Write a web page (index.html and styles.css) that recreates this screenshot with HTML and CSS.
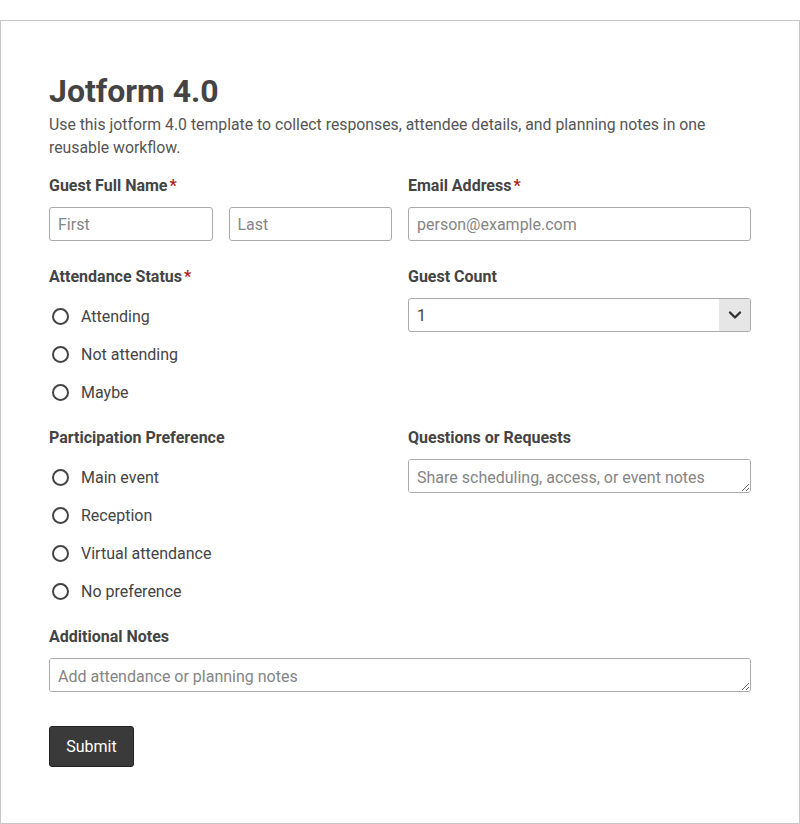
FILE: index.html
```html
<!DOCTYPE html>
<html lang="en">
<head>
<meta charset="utf-8">
<title>Jotform 4.0</title>
<link rel="stylesheet" href="styles.css">
</head>
<body>
<main class="card">
  <h1 class="title">Jotform 4.0</h1>
  <p class="desc">Use this jotform 4.0 template to collect responses, attendee details, and planning notes in one reusable workflow.</p>
  <form class="grid">
    <div class="field">
      <div class="label">Guest Full Name<span class="req">*</span></div>
      <div class="name-row">
        <input class="input" type="text" placeholder="First">
        <input class="input" type="text" placeholder="Last">
      </div>
    </div>
    <div class="field">
      <div class="label">Email Address<span class="req">*</span></div>
      <input class="input" type="email" placeholder="person@example.com">
    </div>

    <div class="field">
      <div class="label">Attendance Status<span class="req">*</span></div>
      <div class="options">
        <label class="option"><span class="radio"></span>Attending</label>
        <label class="option"><span class="radio"></span>Not attending</label>
        <label class="option"><span class="radio"></span>Maybe</label>
      </div>
    </div>
    <div class="field">
      <div class="label">Guest Count</div>
      <div class="select">
        <span class="select-value">1</span>
        <span class="select-arrow">
          <svg width="14" height="10" viewBox="0 0 14 10"><path d="M2 2.5 L7 7.5 L12 2.5" fill="none" stroke="#333" stroke-width="2.4" stroke-linecap="round" stroke-linejoin="round"/></svg>
        </span>
      </div>
    </div>

    <div class="field">
      <div class="label">Participation Preference</div>
      <div class="options">
        <label class="option"><span class="radio"></span>Main event</label>
        <label class="option"><span class="radio"></span>Reception</label>
        <label class="option"><span class="radio"></span>Virtual attendance</label>
        <label class="option"><span class="radio"></span>No preference</label>
      </div>
    </div>
    <div class="field">
      <div class="label">Questions or Requests</div>
      <textarea class="input textarea" rows="1" placeholder="Share scheduling, access, or event notes"></textarea>
    </div>

    <div class="field full">
      <div class="label">Additional Notes</div>
      <textarea class="input textarea" rows="1" placeholder="Add attendance or planning notes"></textarea>
    </div>

    <div class="actions full">
      <button class="submit" type="button">Submit</button>
    </div>
  </form>
</main>
</body>
</html>
```

FILE: styles.css
```css
* { box-sizing: border-box; }

html, body {
  margin: 0;
  padding: 0;
  background: #ffffff;
}

body {
  padding-top: 20px;
  font-family: Roboto, "Liberation Sans", Arial, sans-serif;
  color: #444;
}

.card {
  width: 800px;
  border: 1px solid #c8c8c8;
  padding: 51px 48px 56px 48px;
}

.title {
  margin: 0;
  font-size: 32px;
  line-height: 38px;
  font-weight: 700;
  color: #444;
}

.desc {
  margin: 3px 0 17px 0;
  font-size: 15.8px;
  line-height: 23px;
  color: #555;
}

.grid {
  display: grid;
  grid-template-columns: 1fr 1fr;
  column-gap: 16px;
  margin: 0;
}

.field {
  display: flex;
  flex-direction: column;
  margin-bottom: 26px;
}

.full { grid-column: 1 / -1; }

.label {
  font-size: 16px;
  line-height: 20px;
  font-weight: 700;
  color: #444;
  margin-bottom: 11px;
}

.req {
  color: #b01c1c;
  margin-left: 2px;
}

.name-row {
  display: grid;
  grid-template-columns: 1fr 1fr;
  gap: 16px;
}

.input {
  display: block;
  width: 100%;
  height: 34px;
  border: 1px solid #aaa;
  border-radius: 3px;
  padding: 0 8px;
  font-family: Roboto, "Liberation Sans", Arial, sans-serif;
  font-size: 16px;
  color: #444;
  background: #fff;
  outline: none;
}

.input::placeholder { color: #858585; }

.textarea {
  resize: vertical;
  padding: 7px 8px 6px 8px;
  line-height: 21px;
  min-height: 34px;
}

.options {
  display: flex;
  flex-direction: column;
  margin-top: -1px;
  margin-bottom: -9px;
}

.option {
  display: flex;
  align-items: center;
  height: 38px;
  font-size: 16px;
  color: #444;
}

.radio {
  width: 17px;
  height: 17px;
  border: 2px solid #444;
  border-radius: 50%;
  margin-left: 3px;
  margin-right: 12px;
  flex: none;
}

.select {
  display: flex;
  height: 34px;
  border: 1px solid #aaa;
  border-radius: 3px;
  overflow: hidden;
}

.select-value {
  flex: 1;
  display: flex;
  align-items: center;
  padding-left: 8px;
  font-size: 16px;
  color: #444;
}

.select-arrow {
  width: 31px;
  background: #e6e6e6;
  display: flex;
  align-items: center;
  justify-content: center;
}

.actions {
  padding-top: 8px;
}

.submit {
  width: 85px;
  height: 41px;
  padding: 0;
  background: #3a3a3a;
  border: 1px solid #222;
  border-radius: 3px;
  color: #fff;
  font-family: Roboto, "Liberation Sans", Arial, sans-serif;
  font-size: 16px;
  cursor: pointer;
}
```
